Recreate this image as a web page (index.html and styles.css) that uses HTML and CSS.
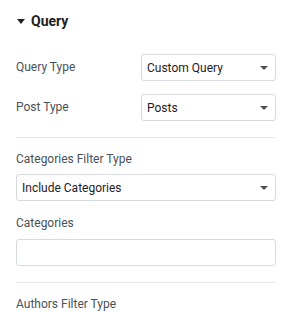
FILE: index.html
```html
<!DOCTYPE html>
<html lang="en">
<head>
  <meta charset="UTF-8">
  <title>Query</title>
  <link rel="stylesheet" href="styles.css">
</head>
<body>

  <div class="panel">
    <div class="section-head">
      <span class="caret"></span>
      <span class="section-title">Query</span>
    </div>

    <div class="row">
      <label class="label">Query Type</label>
      <div class="select small"><span>Custom Query</span><span class="arrow"></span></div>
    </div>

    <div class="row second">
      <label class="label">Post Type</label>
      <div class="select small"><span>Posts</span><span class="arrow"></span></div>
    </div>

    <div class="divider"></div>

    <div class="block">
      <label class="label">Categories Filter Type</label>
      <div class="select"><span>Include Categories</span><span class="arrow"></span></div>
    </div>

    <div class="block">
      <label class="label">Categories</label>
      <div class="input"></div>
    </div>

    <div class="divider"></div>

    <div class="block">
      <label class="label">Authors Filter Type</label>
    </div>
  </div>

</body>
</html>
```

FILE: styles.css
```css
body {
  margin: 0;
  background: #fff;
  font-family: Roboto, Arial, sans-serif;
  overflow: hidden;
}

.panel {
  padding: 0 17px 0 16px;
}

.section-head {
  height: 42px;
  display: flex;
  align-items: center;
  gap: 6px;
}

.caret {
  width: 0;
  height: 0;
  margin-left: 1px;
  border-left: 4px solid transparent;
  border-right: 4px solid transparent;
  border-top: 5px solid #1f2124;
}

.section-title {
  font-size: 14px;
  font-weight: 700;
  color: #1f2124;
}

.label {
  display: block;
  font-size: 12px;
  line-height: 15px;
  color: #495157;
}

.row {
  display: flex;
  align-items: center;
  margin-top: 12px;
}

.row.second {
  margin-top: 13px;
}

.row .label {
  flex: 1;
}

.select {
  height: 27px;
  box-sizing: border-box;
  border: 1px solid #d5dadf;
  border-radius: 3px;
  display: flex;
  align-items: center;
  justify-content: space-between;
  padding: 0 7px 0 5px;
  font-size: 12px;
  color: #1f2124;
  margin-top: 7px;
}

.select.small {
  width: 135px;
  margin-top: 0;
}

.arrow {
  width: 0;
  height: 0;
  border-left: 4px solid transparent;
  border-right: 4px solid transparent;
  border-top: 4px solid #495157;
}

.input {
  height: 27px;
  box-sizing: border-box;
  border: 1px solid #d5dadf;
  border-radius: 3px;
  margin-top: 8px;
}

.divider {
  height: 1px;
  background: #e6e9ec;
  margin-top: 16px;
}

.block {
  margin-top: 15px;
}

.divider + .block {
  margin-top: 14px;
}
```
